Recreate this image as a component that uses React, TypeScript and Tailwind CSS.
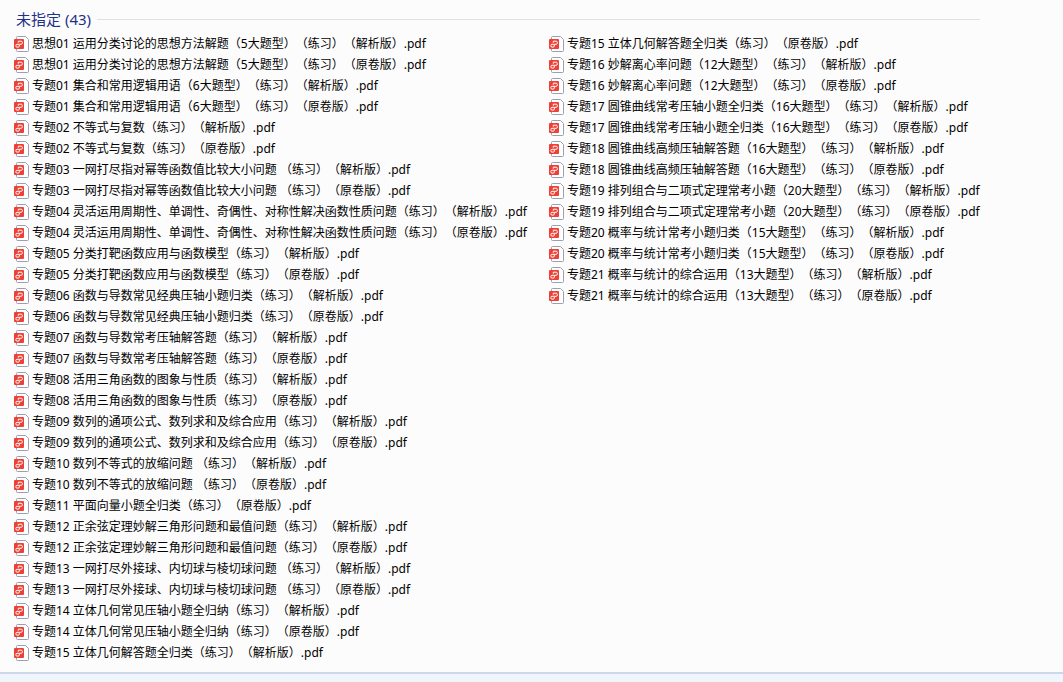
const files: string[] = [
  '思想01 运用分类讨论的思想方法解题（5大题型）（练习）（解析版）.pdf',
  '思想01 运用分类讨论的思想方法解题（5大题型）（练习）（原卷版）.pdf',
  '专题01 集合和常用逻辑用语（6大题型）（练习）（解析版）.pdf',
  '专题01 集合和常用逻辑用语（6大题型）（练习）（原卷版）.pdf',
  '专题02 不等式与复数（练习）（解析版）.pdf',
  '专题02 不等式与复数（练习）（原卷版）.pdf',
  '专题03 一网打尽指对幂等函数值比较大小问题 （练习）（解析版）.pdf',
  '专题03 一网打尽指对幂等函数值比较大小问题 （练习）（原卷版）.pdf',
  '专题04 灵活运用周期性、单调性、奇偶性、对称性解决函数性质问题（练习）（解析版）.pdf',
  '专题04 灵活运用周期性、单调性、奇偶性、对称性解决函数性质问题（练习）（原卷版）.pdf',
  '专题05 分类打靶函数应用与函数模型（练习）（解析版）.pdf',
  '专题05 分类打靶函数应用与函数模型（练习）（原卷版）.pdf',
  '专题06 函数与导数常见经典压轴小题归类（练习）（解析版）.pdf',
  '专题06 函数与导数常见经典压轴小题归类（练习）（原卷版）.pdf',
  '专题07 函数与导数常考压轴解答题（练习）（解析版）.pdf',
  '专题07 函数与导数常考压轴解答题（练习）（原卷版）.pdf',
  '专题08 活用三角函数的图象与性质（练习）（解析版）.pdf',
  '专题08 活用三角函数的图象与性质（练习）（原卷版）.pdf',
  '专题09 数列的通项公式、数列求和及综合应用（练习）（解析版）.pdf',
  '专题09 数列的通项公式、数列求和及综合应用（练习）（原卷版）.pdf',
  '专题10 数列不等式的放缩问题 （练习）（解析版）.pdf',
  '专题10 数列不等式的放缩问题 （练习）（原卷版）.pdf',
  '专题11 平面向量小题全归类（练习）（原卷版）.pdf',
  '专题12 正余弦定理妙解三角形问题和最值问题（练习）（解析版）.pdf',
  '专题12 正余弦定理妙解三角形问题和最值问题（练习）（原卷版）.pdf',
  '专题13 一网打尽外接球、内切球与棱切球问题 （练习）（解析版）.pdf',
  '专题13 一网打尽外接球、内切球与棱切球问题 （练习）（原卷版）.pdf',
  '专题14 立体几何常见压轴小题全归纳（练习）（解析版）.pdf',
  '专题14 立体几何常见压轴小题全归纳（练习）（原卷版）.pdf',
  '专题15 立体几何解答题全归类（练习）（解析版）.pdf',
  '专题15 立体几何解答题全归类（练习）（原卷版）.pdf',
  '专题16 妙解离心率问题（12大题型）（练习）（解析版）.pdf',
  '专题16 妙解离心率问题（12大题型）（练习）（原卷版）.pdf',
  '专题17 圆锥曲线常考压轴小题全归类（16大题型）（练习）（解析版）.pdf',
  '专题17 圆锥曲线常考压轴小题全归类（16大题型）（练习）（原卷版）.pdf',
  '专题18 圆锥曲线高频压轴解答题（16大题型）（练习）（解析版）.pdf',
  '专题18 圆锥曲线高频压轴解答题（16大题型）（练习）（原卷版）.pdf',
  '专题19 排列组合与二项式定理常考小题（20大题型）（练习）（解析版）.pdf',
  '专题19 排列组合与二项式定理常考小题（20大题型）（练习）（原卷版）.pdf',
  '专题20 概率与统计常考小题归类（15大题型）（练习）（解析版）.pdf',
  '专题20 概率与统计常考小题归类（15大题型）（练习）（原卷版）.pdf',
  '专题21 概率与统计的综合运用（13大题型）（练习）（解析版）.pdf',
  '专题21 概率与统计的综合运用（13大题型）（练习）（原卷版）.pdf',
];

function PdfIcon() {
  return (
    <svg className="h-4 w-4 shrink-0" viewBox="0 0 16 16" fill="none" aria-hidden="true">
      <path d="M3.500 .5h8l3 3v11a1 1 0 0 1-1 1h-10a1 1 0 0 1-1-1v-13a1 1 0 0 1 1-1z" fill="#fff" stroke="#9a9fb1" />
      <rect y="3" width="10" height="10" rx="1" fill="#ee4035" />
      <path
        d="M4.300 6.700V5.200H7.200Q8.300 5.200 8.300 6.400V7.200Q8.300 8.300 7.200 8.300H3Q1.900 8.300 1.900 9.400V10Q1.900 11.100 3 11.100H4.300Q5.300 11.100 5.300 10.100V8.900"
        stroke="#fff"
        strokeWidth="1"
      />
    </svg>
  );
}

export default function App() {
  return (
    <div className="flex min-h-screen flex-col bg-[#fcfcfc] font-['Noto_Sans','Noto_Sans_CJK_SC',sans-serif] text-black [text-spacing-trim:space-all]">
      <main className="grow pb-2 pl-[14px] pt-2">
        <header className="mr-[83px] flex items-center gap-1.5 pl-0.5">
          <h1 className="text-[15px] leading-[22px] text-[#1e3287]">未指定 (43)</h1>
          <div className="h-px grow bg-[#e0e0e0]" />
        </header>
        <ul className="mt-[3px] grid auto-cols-max grid-flow-col grid-rows-[repeat(30,21px)] gap-x-[22px]">
          {files.map((name) => (
            <li key={name} className="flex items-center gap-0.5 whitespace-nowrap text-[12px] leading-[21px]">
              <PdfIcon />
              <span>{name}</span>
            </li>
          ))}
        </ul>
      </main>
      <footer className="h-[10px] border-t-2 border-[#c9d8ea] bg-[#f0f4fb]" />
    </div>
  );
}
